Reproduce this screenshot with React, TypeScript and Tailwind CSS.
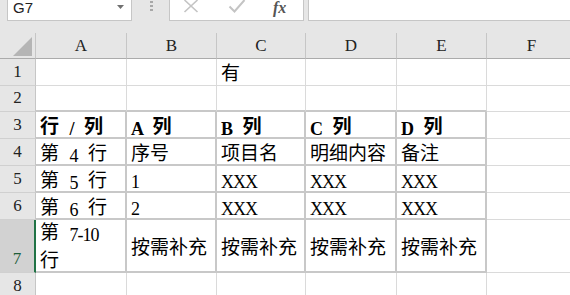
import React from "react";

const CJK_RE = /[\u3000-\u9fff\uff00-\uffef]/;
const SPLIT_RE = /([\u3000-\u9fff\uff00-\uffef]+|[^\u3000-\u9fff\uff00-\uffef]+)/g;

function Txt({ s, bold }: { s: string; bold?: boolean }) {
  const parts = s.match(SPLIT_RE) || [];
  return (
    <span className={"whitespace-pre text-black " + (bold ? "font-bold" : "font-normal")}>
      {parts.map((p, i) =>
        CJK_RE.test(p) ? (
          <span key={i} className="font-['Noto_Sans_CJK_SC',sans-serif] text-[19px]">
            {p}
          </span>
        ) : (
          <span
            key={i}
            className="relative top-[2px] font-['Liberation_Serif','Noto_Sans_CJK_SC',serif] text-[18px] tracking-[-1px] [word-spacing:7px]"
          >
            {p}
          </span>
        )
      )}
    </span>
  );
}

const COLS = ["A", "B", "C", "D", "E", "F"];

const DATA: string[][] = [
  ["", "", "有", "", "", ""],
  ["", "", "", "", "", ""],
  ["行 / 列", "A 列", "B 列", "C 列", "D 列", ""],
  ["第 4 行", "序号", "项目名", "明细内容", "备注", ""],
  ["第 5 行", "1", "XXX", "XXX", "XXX", ""],
  ["第 6 行", "2", "XXX", "XXX", "XXX", ""],
  ["第 7-10\n行", "按需补充", "按需补充", "按需补充", "按需补充", ""],
  ["", "", "", "", "", ""],
];

function Cell({ r, c, text }: { r: number; c: number; text: string }) {
  const inTable = r >= 3 && r <= 7 && c <= 4;
  const topOfTable = r === 2 && c <= 4;
  const right = inTable ? "border-r-2 border-r-[#c8c8c8]" : "border-r border-r-[#dadada]";
  const bottom =
    inTable || topOfTable ? "border-b-2 border-b-[#c8c8c8]" : "border-b border-b-[#dadada]";
  const bold = r === 3;
  if (text.includes("\n")) {
    const lines = text.split("\n");
    return (
      <div className={`bg-white ${right} ${bottom} flex flex-col justify-center pl-[4px] leading-[25px]`}>
        {lines.map((l, i) => (
          <div key={i} className="whitespace-nowrap">
            <Txt s={l} />
          </div>
        ))}
      </div>
    );
  }
  return (
    <div
      className={`bg-white ${right} ${bottom} flex items-center pl-[4px] pt-[3px] leading-[20px] overflow-hidden whitespace-nowrap`}
    >
      {text && <Txt s={text} bold={bold} />}
    </div>
  );
}

export default function App() {
  return (
    <div className="w-[570px] h-[295px] overflow-hidden bg-white font-['Liberation_Serif',serif]">
      {/* Formula bar */}
      <div className="h-[33px] bg-[#e6e6e6] flex items-start">
        <div className="ml-[7px] w-[125px] h-[21px] bg-white border border-t-0 border-[#c6c6c6] flex items-start justify-between pl-[5px] pr-[7px]">
          <span className="font-['Liberation_Sans',sans-serif] text-[15px] leading-[16px] text-[#222]">
            G7
          </span>
          <svg width="7" height="4" viewBox="0 0 7 4" className="mt-[5px]">
            <path d="M0 0 L7 0 L3.5 4 Z" fill="#707070" />
          </svg>
        </div>
        <div className="ml-[18px] w-[3px] flex flex-col gap-[2px] pt-[1px]">
          <div className="w-[3px] h-[2px] bg-[#a8a8a8]" />
          <div className="w-[3px] h-[2px] bg-[#a8a8a8]" />
          <div className="w-[3px] h-[2px] bg-[#a8a8a8]" />
        </div>
        <div className="ml-[16px] w-[135px] h-[21px] bg-white border border-t-0 border-[#c6c6c6] flex items-start">
          <svg width="16" height="14" viewBox="0 0 16 14" className="ml-[13px] -mt-[1px]">
            <path d="M1.5 1 L14.5 13 M14.5 1 L1.5 13" stroke="#c4c4c4" strokeWidth="1.6" fill="none" />
          </svg>
          <svg width="18" height="14" viewBox="0 0 18 14" className="ml-[29px] -mt-[1px]">
            <path d="M1.5 7.5 L6.5 12.5 L16.5 1" stroke="#c4c4c4" strokeWidth="2" fill="none" />
          </svg>
          <span className="ml-[27px] mt-[1px] italic font-['Liberation_Serif',serif] text-[16px] leading-[14px] text-[#555] font-bold">
            fx
          </span>
        </div>
        <div className="ml-[4px] flex-1 h-[21px] bg-white border border-t-0 border-r-0 border-[#c6c6c6]" />
      </div>

      {/* Sheet */}
      <div className="grid grid-cols-[36px_91px_90px_89px_91px_90px_90px] grid-rows-[26px_27px_26px_27px_27px_27px_27px_53px_27px]">
        {/* corner */}
        <div className="bg-[#e6e6e6] border-r border-r-[#c6c6c6] border-b border-b-[#ababab] flex items-end justify-end pr-[3px] pb-[2px]">
          <svg width="19" height="19" viewBox="0 0 19 19">
            <path d="M19 0 L19 19 L0 19 Z" fill="#b5b5b5" />
          </svg>
        </div>
        {COLS.map((col) => (
          <div
            key={col}
            className="bg-[#e6e6e6] border-r border-r-[#c6c6c6] border-b border-b-[#ababab] flex items-end justify-center pb-[2px] text-[17px] leading-[20px] text-[#222] font-['Liberation_Serif',serif]"
          >
            {col}
          </div>
        ))}
        {DATA.map((row, ri) => {
          const r = ri + 1;
          const sel = r === 7;
          return (
            <React.Fragment key={r}>
              <div
                className={
                  "flex items-end justify-center pb-[3px] text-[17px] leading-[20px] font-['Liberation_Serif',serif] border-b border-b-[#d0d0d0] " +
                  (sel
                    ? "bg-[#d2d2d2] text-[#1e5e3a] border-r-2 border-r-[#217346]"
                    : "bg-[#e6e6e6] text-[#222] border-r border-r-[#c6c6c6]")
                }
              >
                {r}
              </div>
              {row.map((t, c) => (
                <Cell key={c} r={r} c={c} text={t} />
              ))}
            </React.Fragment>
          );
        })}
      </div>
    </div>
  );
}
